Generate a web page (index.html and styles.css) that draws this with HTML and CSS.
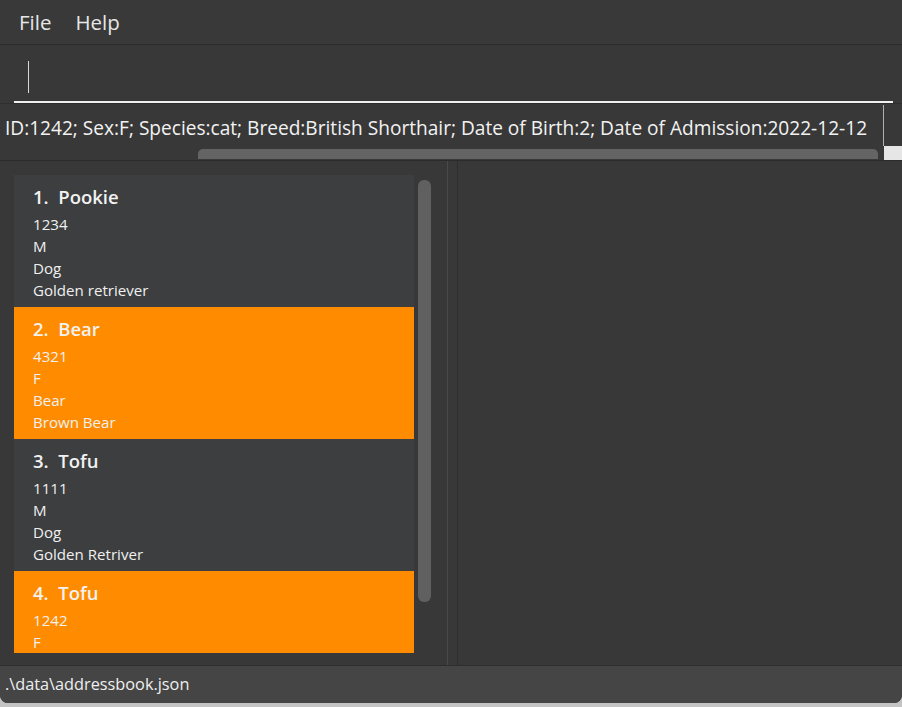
FILE: index.html
```html
<!DOCTYPE html>
<html>
<head>
<meta charset="utf-8">
<link rel="stylesheet" href="styles.css">
</head>
<body>
<div class="window">
  <div class="menubar">
    <span class="menu-item">File</span>
    <span class="menu-item">Help</span>
  </div>
  <div class="command">
    <div class="command-field"><span class="caret"></span></div>
  </div>
  <div class="result">
    <div class="result-box">
      <div class="result-text">ID:1242; Sex:F; Species:cat; Breed:British Shorthair; Date of Birth:2; Date of Admission:2022-12-12</div>
      <div class="hscroll"><div class="hthumb"></div></div>
    </div>
    <div class="result-side"><div class="corner"></div></div>
  </div>
  <div class="main">
    <div class="left-pane">
      <div class="list">
        <div class="card">
          <div class="card-title">1.&nbsp;&nbsp;Pookie</div>
          <div class="card-line">1234</div>
          <div class="card-line">M</div>
          <div class="card-line">Dog</div>
          <div class="card-line">Golden retriever</div>
        </div>
        <div class="card card-orange">
          <div class="card-title">2.&nbsp;&nbsp;Bear</div>
          <div class="card-line">4321</div>
          <div class="card-line">F</div>
          <div class="card-line">Bear</div>
          <div class="card-line">Brown Bear</div>
        </div>
        <div class="card">
          <div class="card-title">3.&nbsp;&nbsp;Tofu</div>
          <div class="card-line">1111</div>
          <div class="card-line">M</div>
          <div class="card-line">Dog</div>
          <div class="card-line">Golden Retriver</div>
        </div>
        <div class="card card-orange card-last">
          <div class="card-title">4.&nbsp;&nbsp;Tofu</div>
          <div class="card-line">1242</div>
          <div class="card-line">F</div>
        </div>
      </div>
      <div class="vscroll"><div class="vthumb"></div></div>
    </div>
    <div class="divider"></div>
    <div class="right-pane"></div>
  </div>
  <div class="status">.\data\addressbook.json</div>
</div>
</body>
</html>
```

FILE: styles.css
```css
html, body {
  margin: 0;
  padding: 0;
}
body {
  width: 902px;
  height: 707px;
  overflow: hidden;
  background: #c4c4c4;
  font-family: "Open Sans", "Noto Sans", sans-serif;
  color: #f2f2f2;
}
.window {
  height: 703px;
  background: #383838;
  display: flex;
  flex-direction: column;
  border-radius: 0 0 8px 8px;
  overflow: hidden;
}
.menubar {
  height: 44px;
  flex: none;
  background: #393939;
  border-bottom: 1px solid #2c2c2c;
  display: flex;
  align-items: center;
  padding-left: 19px;
  gap: 24px;
}
.menu-item {
  font-size: 20.5px;
  color: #e6e6e6;
  line-height: 44px;
}
.command {
  height: 58px;
  flex: none;
  background: #383838;
  padding: 0 9px 0 14px;
  border-bottom: 1px solid #2e2e2e;
}
.command-field {
  height: 56px;
  border-bottom: 2px solid #f0f0f0;
  display: flex;
  align-items: flex-start;
  padding-left: 14px;
}
.caret {
  display: block;
  width: 1px;
  height: 32px;
  margin-top: 16px;
  background: #d8d8d8;
}
.result {
  height: 56px;
  flex: none;
  display: flex;
  background: #383838;
  border-bottom: 1px solid #2b2b2b;
}
.result-box {
  width: 884px;
  flex: none;
  display: flex;
  flex-direction: column;
}
.result-text {
  line-height: 46px;
  font-size: 19.1px;
  white-space: nowrap;
  padding-left: 5px;
  color: #f2f2f2;
  overflow: hidden;
  border-right: 1px solid #b0b0b0;
  margin-top: 1px;
  margin-bottom: -1px;
  height: 41px;
}
.hscroll {
  height: 10px;
  margin-top: 4px;
  padding-left: 198px;
  padding-right: 6px;
}
.hthumb {
  height: 10px;
  background: #646464;
  border-radius: 5px 5px 0 0;
}
.result-side {
  flex: 1;
  display: flex;
  align-items: flex-end;
}
.corner {
  width: 100%;
  height: 14px;
  background: #e6e6e6;
}
.main {
  flex: 1;
  min-height: 0;
  display: flex;
  background: #383838;
}
.left-pane {
  width: 448px;
  flex: none;
  border-right: 1px solid #4a4a4a;
  display: flex;
  padding: 14px 0 12px 14px;
  box-sizing: border-box;
}
.list {
  width: 400px;
  flex: none;
  overflow: hidden;
}
.card {
  height: 132px;
  box-sizing: border-box;
  background: #3c3e3f;
  padding: 9px 0 5px 19px;
}
.card-last {
  height: 82px;
}
.card-orange {
  background: #ff8c00;
}
.card-title {
  font-size: 18.5px;
  font-weight: 600;
  line-height: 26px;
  margin-bottom: 3px;
  color: #f2f2f2;
}
.card-line {
  font-size: 15.1px;
  line-height: 22px;
  color: #f0f0f0;
}
.vscroll {
  width: 13px;
  margin-left: 4px;
  padding-top: 5px;
}
.vthumb {
  height: 422px;
  background: #606060;
  border-radius: 6px;
}
.divider {
  width: 9px;
  flex: none;
  background: #383838;
  border-right: 1px solid #2e2e2e;
}
.right-pane {
  flex: 1;
  background: #383838;
}
.status {
  height: 37px;
  flex: none;
  background: #454545;
  border-top: 1px solid #2e2e2e;
  font-size: 16.3px;
  line-height: 37px;
  padding-left: 5px;
  color: #efefef;
}
```
